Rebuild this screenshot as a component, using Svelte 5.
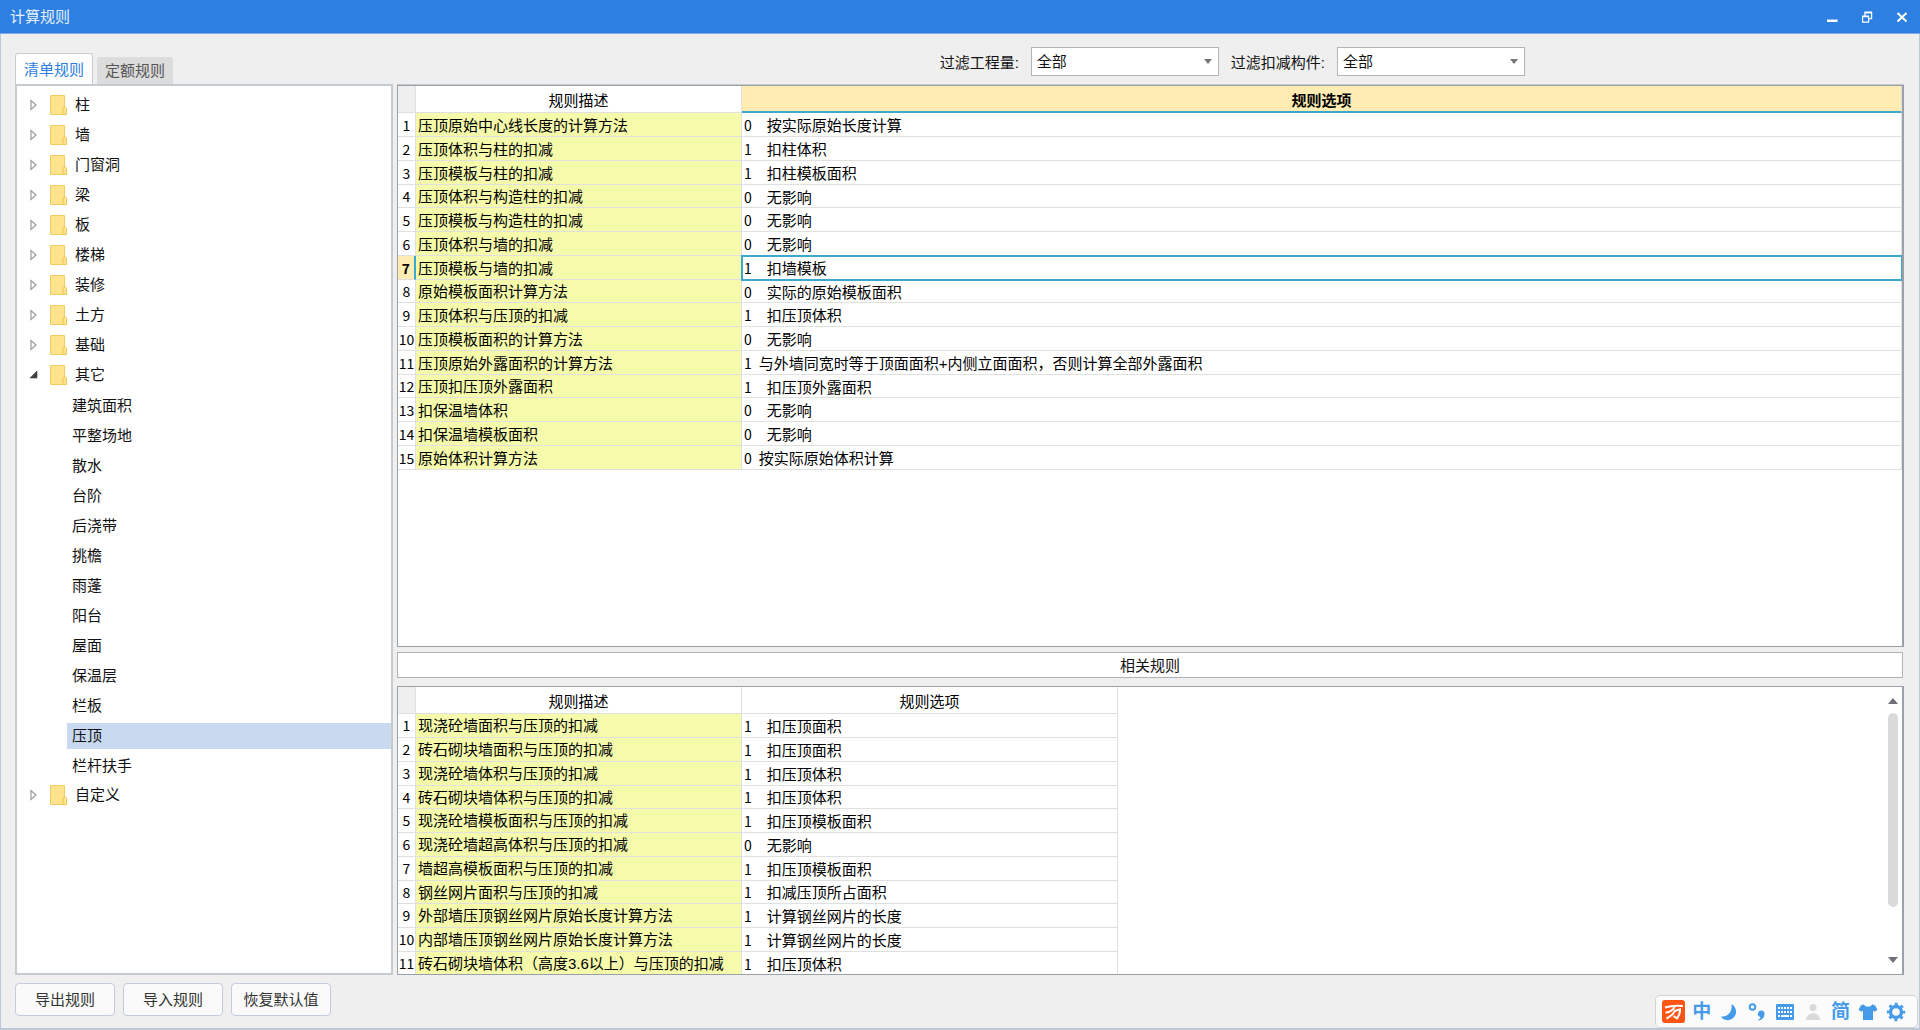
<script>
  const folders = ["柱", "墙", "门窗洞", "梁", "板", "楼梯", "装修", "土方", "基础", "其它", "自定义"];
  const others = [
    "建筑面积",
    "平整场地",
    "散水",
    "台阶",
    "后浇带",
    "挑檐",
    "雨蓬",
    "阳台",
    "屋面",
    "保温层",
    "栏板",
    "压顶",
    "栏杆扶手",
  ];
  // tight: option text follows its code after a single space
  const rules = [
    { name: "压顶原始中心线长度的计算方法", code: 0, option: "按实际原始长度计算" },
    { name: "压顶体积与柱的扣减", code: 1, option: "扣柱体积" },
    { name: "压顶模板与柱的扣减", code: 1, option: "扣柱模板面积" },
    { name: "压顶体积与构造柱的扣减", code: 0, option: "无影响" },
    { name: "压顶模板与构造柱的扣减", code: 0, option: "无影响" },
    { name: "压顶体积与墙的扣减", code: 0, option: "无影响" },
    { name: "压顶模板与墙的扣减", code: 1, option: "扣墙模板" },
    { name: "原始模板面积计算方法", code: 0, option: "实际的原始模板面积" },
    { name: "压顶体积与压顶的扣减", code: 1, option: "扣压顶体积" },
    { name: "压顶模板面积的计算方法", code: 0, option: "无影响" },
    {
      name: "压顶原始外露面积的计算方法",
      code: 1,
      option: "与外墙同宽时等于顶面面积+内侧立面面积，否则计算全部外露面积",
      tight: true,
    },
    { name: "压顶扣压顶外露面积", code: 1, option: "扣压顶外露面积" },
    { name: "扣保温墙体积", code: 0, option: "无影响" },
    { name: "扣保温墙模板面积", code: 0, option: "无影响" },
    { name: "原始体积计算方法", code: 0, option: "按实际原始体积计算", tight: true },
  ];
  const related = [
    { name: "现浇砼墙面积与压顶的扣减", code: 1, option: "扣压顶面积" },
    { name: "砖石砌块墙面积与压顶的扣减", code: 1, option: "扣压顶面积" },
    { name: "现浇砼墙体积与压顶的扣减", code: 1, option: "扣压顶体积" },
    { name: "砖石砌块墙体积与压顶的扣减", code: 1, option: "扣压顶体积" },
    { name: "现浇砼墙模板面积与压顶的扣减", code: 1, option: "扣压顶模板面积" },
    { name: "现浇砼墙超高体积与压顶的扣减", code: 0, option: "无影响" },
    { name: "墙超高模板面积与压顶的扣减", code: 1, option: "扣压顶模板面积" },
    { name: "钢丝网片面积与压顶的扣减", code: 1, option: "扣减压顶所占面积" },
    { name: "外部墙压顶钢丝网片原始长度计算方法", code: 1, option: "计算钢丝网片的长度" },
    { name: "内部墙压顶钢丝网片原始长度计算方法", code: 1, option: "计算钢丝网片的长度" },
    { name: "砖石砌块墙体积（高度3.6以上）与压顶的扣减", code: 1, option: "扣压顶体积" },
  ];
  let tab = $state("清单规则");
  let open = $state("其它");
  let selected = $state("压顶");
  let current = $state(6);
</script>

<div class="window">
  <header class="titlebar">
    <h1>计算规则</h1>
    <div class="controls">
      <button aria-label="最小化">
        <svg width="12" height="12" viewBox="0 0 12 12"><path d="M1 8.500h10.500v2.500H1z" fill="#fff" /></svg>
      </button>
      <button aria-label="还原">
        <svg width="12" height="12" viewBox="0 0 12 12" fill="none" stroke="#fff">
          <path d="M1.600 5.500h6v5.600h-6zM4 5V1.600h6.600v6H8" stroke-width="1.200" />
          <path d="M1 5.400h7M3.500 1.300h7.600" stroke-width="1.800" />
        </svg>
      </button>
      <button aria-label="关闭">
        <svg width="12" height="12" viewBox="0 0 12 12"
          ><path d="M1.500 2l9 8.500M10.500 2l-9 8.500" stroke="#fff" stroke-width="2" /></svg
        >
      </button>
    </div>
  </header>

  <div class="topbar">
    <div class="tabs" role="tablist">
      {#each ["清单规则", "定额规则"] as t}
        <button role="tab" class:active={tab === t} aria-selected={tab === t} onclick={() => (tab = t)}
          >{t}</button
        >
      {/each}
    </div>
    <form class="filters">
      <label for="quantity">过滤工程量:</label>
      <span class="select"><select id="quantity"><option>全部</option></select></span>
      <label for="member">过滤扣减构件:</label>
      <span class="select"><select id="member"><option>全部</option></select></span>
    </form>
  </div>

  <main>
    <nav class="tree">
      <ul>
        {#each folders as folder}
          <li>
            <button class="node" onclick={() => (open = open === folder ? "" : folder)}>
              <svg class="arrow" width="8" height="12" viewBox="0 0 8 12">
                {#if open === folder}
                  <path d="M7 2v7H0z" fill="#404040" stroke="#404040" stroke-width=".6" />
                {:else}
                  <path d="M1 1.500v9L6 6z" fill="#fff" stroke="#9a9a9a" stroke-width="1.200" />
                {/if}
              </svg>
              <svg class="folder" width="17" height="20" viewBox="0 0 17 20">
                <path d="M.5.5h14v19H.5z" fill="#ffe48d" stroke="#f2cd60" />
                <path d="M13 19.500v-6l1-1.500h1.500l1 1.500v6z" fill="#ffe48d" stroke="#edc650" />
              </svg>
              {folder}
            </button>
            {#if folder === "其它" && open === folder}
              <ul class="leaves">
                {#each others as item}
                  <li>
                    <button
                      class="leaf"
                      class:selected={selected === item}
                      onclick={() => (selected = item)}>{item}</button
                    >
                  </li>
                {/each}
              </ul>
            {/if}
          </li>
        {/each}
      </ul>
    </nav>

    <div class="panes">
      <section class="pane">
        <table class="wide">
          <thead>
            <tr>
              <th class="corner"></th>
              <th class="name">规则描述</th>
              <th class="highlight">规则选项</th>
            </tr>
          </thead>
          <tbody>
            {#each rules as rule, i}
              <tr class:current={current === i} onclick={() => (current = i)}>
                <th>{i + 1}</th>
                <td class="name">{rule.name}</td>
                <td><span class="code" class:tight={rule.tight}>{rule.code}</span>{rule.option}</td>
              </tr>
            {/each}
          </tbody>
        </table>
      </section>

      <h2>相关规则</h2>

      <section class="pane">
        <table>
          <thead>
            <tr>
              <th class="corner"></th>
              <th class="name">规则描述</th>
              <th class="option">规则选项</th>
            </tr>
          </thead>
          <tbody>
            {#each related as rule, i}
              <tr>
                <th>{i + 1}</th>
                <td class="name">{rule.name}</td>
                <td><span class="code">{rule.code}</span>{rule.option}</td>
              </tr>
            {/each}
          </tbody>
        </table>
        <div class="scrollbar">
          <svg width="10" height="6" viewBox="0 0 10 6"><path d="M5 0l5 6H0z" fill="#6f6f76" /></svg>
          <div class="track"><div class="thumb"></div></div>
          <svg width="10" height="6" viewBox="0 0 10 6"><path d="M0 0h10L5 6z" fill="#6f6f76" /></svg>
        </div>
      </section>
    </div>
  </main>

  <footer>
    <button>导出规则</button>
    <button>导入规则</button>
    <button>恢复默认值</button>
  </footer>

  <div class="ime">
    <button aria-label="万能输入法">
      <svg width="23" height="23" viewBox="0 0 23 23">
        <rect width="23" height="23" rx="3" fill="#ff5414" />
        <g fill="none" stroke="#fff" stroke-width="2">
          <path d="M3 7.500c5-1.500 11-2 18-1.500" />
          <path d="M12.500 7c-1.500 3-4.500 5-9 5.800M13.500 10c-2 4-5 6.500-9 8.500" />
          <path d="M12 11.200l6-1.800c.2 3.500-.8 6.300-3 9l-3.500-2.400" />
        </g>
      </svg>
    </button>
    <button>中</button>
    <button aria-label="半角">
      <svg width="18" height="18" viewBox="0 0 18 18"
        ><path d="M11.500 1C18 5 17.500 14 10.500 16.600 6.500 18 2.500 16.500 1 13.500 8 14.500 12.500 8.500 11.500 1z" fill="#459be8" /></svg
      >
    </button>
    <button aria-label="标点">
      <svg width="18" height="18" viewBox="0 0 18 18">
        <circle cx="4.500" cy="4" r="2.800" fill="none" stroke="#459be8" stroke-width="2" />
        <path d="M10 16.500c2-.5 2.500-1.500 2.300-2.500A3.300 3.300 0 1 1 16.500 11c0 3.500-2.500 6-6 6.500z" fill="#459be8" />
      </svg>
    </button>
    <button aria-label="软键盘">
      <svg width="20" height="18" viewBox="0 0 20 18">
        <rect x="1" y="1" width="18" height="16" rx="1" fill="#459be8" />
        <path
          d="M3 5h14M3 9h14"
          stroke="#fff"
          stroke-width="2.200"
          stroke-dasharray="2 1"
        />
        <path d="M3 13h2M6 13h8M15 13h2" stroke="#fff" stroke-width="2" />
      </svg>
    </button>
    <button aria-label="用户">
      <svg width="16" height="18" viewBox="0 0 16 18" fill="#d9d9d9">
        <circle cx="8" cy="4.500" r="3.500" />
        <path d="M1 17c0-9 14-9 14 0z" />
      </svg>
    </button>
    <button>简</button>
    <button aria-label="皮肤">
      <svg width="20" height="18" viewBox="0 0 20 18"
        ><path d="M6 1.500c1 3 7 3 8 0l3 .8 2.500 4.500-3 2-1.500-1V17H5V7.800l-1.500 1-3-2L3 2.300z" fill="#459be8" /></svg
      >
    </button>
    <button aria-label="设置">
      <svg width="20" height="20" viewBox="0 0 20 20" fill="none" stroke="#459be8">
        <circle cx="10" cy="10" r="5.500" stroke-width="3.400" />
        <circle cx="10" cy="10" r="8" stroke-width="2.400" stroke-dasharray="3 3.283" stroke-dashoffset="1.500" />
      </svg>
    </button>
  </div>
</div>

<style>
  :global(body) {
    font-family: "Liberation Sans", "Noto Sans CJK SC", sans-serif;
    font-size: 15px;
    color: #111;
  }

  * {
    box-sizing: border-box;
  }

  button,
  select {
    font: inherit;
    color: inherit;
    border: none;
    background: none;
    padding: 0;
    margin: 0;
  }

  svg {
    display: block;
  }

  .window {
    position: relative;
    display: flex;
    flex-direction: column;
    height: 100vh;
    background: #efefef;
    overflow: hidden;
  }

  /* title bar */

  .titlebar {
    display: flex;
    flex: none;
    align-items: center;
    justify-content: space-between;
    height: 34px;
    padding: 0 10px;
    background: #2d80e2;
    border-bottom: 1px solid #7fa9df;
    color: #e6f0fc;
  }
  .titlebar h1 {
    margin: 0;
    font-size: 15px;
    font-weight: 400;
    line-height: 32px;
  }
  .controls {
    display: flex;
    gap: 23px;
  }
  .controls button {
    width: 12px;
  }
  .controls button:last-child {
    margin-right: 2px;
  }

  /* tabs and filters */

  .topbar {
    display: flex;
    flex: none;
    align-items: flex-end;
    justify-content: space-between;
    height: 50px;
    padding: 0 14px;
    border: 1px solid #bcc7d8;
    border-width: 0 1px;
  }
  .tabs {
    display: flex;
    align-items: flex-end;
    gap: 4px;
  }
  .tabs button {
    height: 27px;
    padding: 0 8px;
    border-radius: 3px 3px 0 0;
    background: #dcdcdc;
    color: #555;
    line-height: 27px;
  }
  .tabs button.active {
    height: 31px;
    border: 1px solid #c8ccd0;
    border-bottom: none;
    background: #fff;
    color: #2d80e2;
    line-height: 31px;
  }
  .filters {
    display: flex;
    align-items: center;
    align-self: flex-start;
    gap: 12px;
    margin: 13px 380px 0 0;
  }
  .select {
    position: relative;
  }
  .select select {
    display: block;
    width: 188px;
    height: 29px;
    padding: 0 5px;
    border: 1px solid #b4b4b4;
    background: #fff;
    appearance: none;
  }
  .select::after {
    content: "";
    position: absolute;
    right: 7px;
    top: 12px;
    border: 4px solid transparent;
    border-top: 5px solid #777;
    border-bottom: none;
    pointer-events: none;
  }

  /* body */

  main {
    display: flex;
    flex: 1;
    min-height: 0;
    padding: 0 15px 0 14px;
    border: 1px solid #bcc7d8;
    border-width: 0 1px;
  }
  .tree {
    flex: none;
    width: 378px;
    padding-top: 4px;
    border: 2px solid #c6cbd0;
    background: #fff;
    overflow: hidden;
  }
  .tree ul {
    margin: 0;
    padding: 0;
    list-style: none;
  }
  .node {
    display: flex;
    align-items: center;
    width: 100%;
    height: 30px;
    padding-left: 13px;
    line-height: 20px;
  }
  .folder {
    margin: 0 8px 0 12px;
  }
  .tree .leaves {
    display: flex;
    flex-direction: column;
    gap: 4px;
    padding: 3px 0 1px 50px;
  }
  .leaf {
    display: block;
    width: 100%;
    height: 26px;
    padding-left: 5px;
    line-height: 26px;
    text-align: left;
  }
  .leaf.selected {
    background: #c8d9f0;
  }

  .panes {
    display: grid;
    flex: 1;
    grid-template-rows: minmax(0, 35fr) auto minmax(0, 18fr);
    min-width: 0;
    margin-left: 4px;
    border-top: 1px solid #c6cbd0;
  }
  .pane {
    display: flex;
    justify-content: space-between;
    border: 2px solid #9ba1a9;
    border-width: 1px 2px 1px 1px;
    background: #fff;
    overflow: hidden;
  }
  h2 {
    height: 26px;
    margin: 5px 1px 8px 0;
    border: 1px solid #b2b2b2;
    background: #fff;
    font-size: 15px;
    font-weight: 400;
    line-height: 26px;
    text-align: center;
  }

  /* tables */

  table {
    align-self: flex-start;
    border-collapse: separate;
    border-spacing: 0;
    table-layout: fixed;
    width: 720px;
    line-height: 18px;
    color: #000;
  }
  table.wide {
    width: 100%;
  }
  th,
  td {
    height: 24px;
    padding: 2px 0 0;
    border: 1px solid #e0e0e0;
    border-width: 0 1px 1px 0;
    white-space: nowrap;
  }
  /* rows average just under 24px */
  tbody tr:nth-child(4n) > * {
    height: 23px;
  }
  th {
    font-weight: 400;
  }
  thead th {
    height: 27px;
    padding-top: 4px;
  }
  tbody th,
  .code {
    font-family: "Noto Sans CJK SC", sans-serif;
    font-size: 14px;
  }
  tbody th {
    padding-top: 0;
  }
  .corner {
    width: 18px;
    background: #efefef;
  }
  th.name {
    width: 326px;
  }
  td {
    padding-left: 2px;
  }
  td.name {
    background: #f6fbac;
  }
  th.highlight {
    border-bottom: 2px solid #3aa8d0;
    background: #ffecb3;
    font-weight: 700;
  }
  .code {
    margin-right: 15px;
  }
  .code.tight {
    margin-right: 7px;
  }
  .current th {
    border-right: 2px solid #3aa8d0;
    background: #ffecb3;
    font-weight: 700;
  }
  .current td:last-child {
    outline: 2px solid #3aa8d0;
    outline-offset: -1px;
  }

  .scrollbar {
    display: flex;
    flex-direction: column;
    align-items: center;
    width: 10px;
    margin: 11px 4px 11px 0;
  }
  .track {
    flex: 1;
    width: 10px;
    margin: 9px 0 10px;
  }
  .thumb {
    height: 83%;
    border-radius: 5px;
    background: #dadada;
  }

  footer {
    display: flex;
    flex: none;
    gap: 8px;
    padding: 8px 14px 12px;
    border: 1px solid #bcc7d8;
    border-bottom-width: 2px;
    border-top: none;
  }
  footer button {
    width: 100px;
    height: 33px;
    border: 1px solid #c3cbdc;
    border-radius: 4px;
    background: #fafafa;
    color: #333;
    line-height: 31px;
  }

  /* input method bar floats above the window */

  .ime {
    position: absolute;
    right: 2px;
    bottom: 2px;
    display: flex;
    width: 263px;
    height: 33px;
    padding: 0 7px 0 4px;
    border: 1px solid #d4d4d4;
    border-radius: 5px;
    background: #fbfbfb;
    color: #459be8;
    font-size: 19px;
    font-weight: 700;
    line-height: 30px;
  }
  .ime button {
    display: flex;
    flex: 1;
    align-items: center;
    justify-content: center;
  }
</style>
